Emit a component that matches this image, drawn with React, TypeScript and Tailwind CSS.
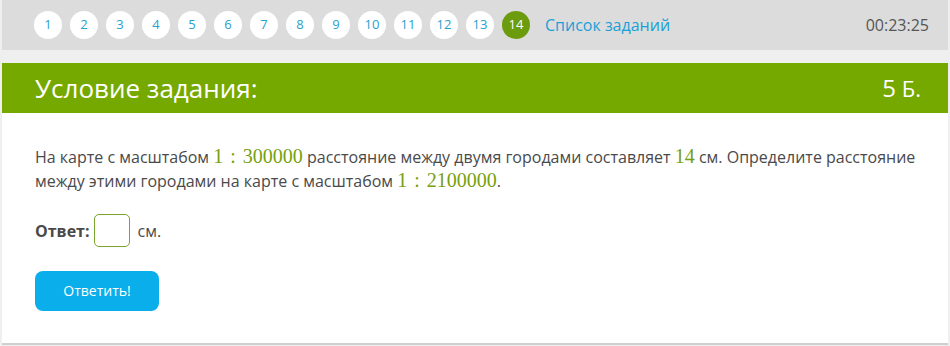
const nums = [1, 2, 3, 4, 5, 6, 7, 8, 9, 10, 11, 12, 13, 14];

function M({ children }: { children: React.ReactNode }) {
  return (
    <span className="font-['Liberation_Serif',serif] text-[20px] leading-none text-[#76a010]">{children}</span>
  );
}

function Ratio({ a, b }: { a: string; b: string }) {
  return (
    <M>
      {a}
      <span className="mx-[7px]">:</span>
      {b}
    </M>
  );
}

export default function App() {
  return (
    <div className="w-[950px] h-[346px] bg-[#efefef] font-['Open_Sans',sans-serif] px-[2px]">
      {/* top bar */}
      <div className="h-[50px] bg-[#dcdcdc] flex items-center pl-[32px] pr-[19px]">
        <div className="flex gap-[8px]">
          {nums.map((n) => (
            <div
              key={n}
              className={
                n === 14
                  ? "w-[28px] h-[28px] rounded-full bg-[#6c9b0e] text-white text-[13px] flex items-center justify-center"
                  : "w-[28px] h-[28px] rounded-full bg-white text-[#2aa0cf] text-[13px] flex items-center justify-center"
              }
            >
              {n}
            </div>
          ))}
        </div>
        <a className="ml-[15px] text-[16px] text-[#1a9fd8]">Список заданий</a>
        <div className="ml-auto text-[16px] text-[#555]">00:23:25</div>
      </div>
      <div className="h-[13px]" />
      {/* task */}
      <div className="bg-white border-b-2 border-[#cfcfcf]">
        <div className="h-[50px] bg-[#76a900] flex items-center justify-between pl-[33px] pr-[27px] text-white">
          <div className="text-[26px]">Условие задания:</div>
          <div className="text-[22px]">
            <span className="text-[24px]">5</span> Б.
          </div>
        </div>
        <div className="pl-[33px] pr-[30px] pt-[32px] pb-[32px] text-[16px] leading-[24px] text-[#4a4a4a]">
          <p>
            На карте с масштабом <Ratio a="1" b="300000" /> расстояние между двумя городами составляет <M>14</M> см. Определите расстояние
            между этими городами на карте с масштабом <Ratio a="1" b="2100000" />.
          </p>
          <div className="mt-[21px] flex items-center">
            <span className="font-bold">Ответ:</span>
            <div className="ml-[4px] w-[36px] h-[33px] border border-[#7aa52e] rounded-[5px]" />
            <span className="ml-[8px]">см.</span>
          </div>
          <button className="mt-[24px] w-[124px] h-[40px] rounded-[8px] bg-[#0aaeea] text-white text-[14px]">
            Ответить!
          </button>
        </div>
      </div>
    </div>
  );
}
